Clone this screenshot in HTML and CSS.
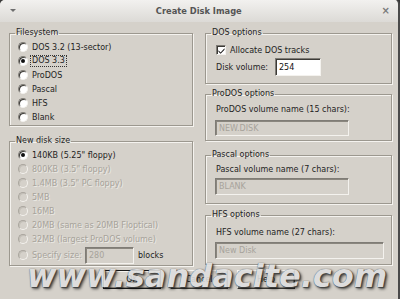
FILE: index.html
```html
<!DOCTYPE html>
<html lang="en">
<head>
    <meta charset="UTF-8">
    <title>Create Disk Image</title>
    <link rel="stylesheet" href="styles.css">
</head>
<body>
    <div class="window">
        <div class="titlebar">
            <span class="menu-arrow"></span>
            <span class="title">Create Disk Image</span>
            <span class="close">&#215;</span>
        </div>

        <div class="content">
            <div class="column column-left">
                <fieldset class="group">
                    <legend>Filesystem</legend>
                    <div class="rows rows-fs">
                        <div class="radio"><span class="radio-box"></span>DOS 3.2 (13-sector)</div>
                        <div class="radio"><span class="radio-box checked"></span><span class="focus">DOS 3.3</span></div>
                        <div class="radio"><span class="radio-box"></span>ProDOS</div>
                        <div class="radio"><span class="radio-box"></span>Pascal</div>
                        <div class="radio"><span class="radio-box"></span>HFS</div>
                        <div class="radio"><span class="radio-box"></span>Blank</div>
                    </div>
                </fieldset>

                <fieldset class="group group-size">
                    <legend>New disk size</legend>
                    <div class="rows rows-size">
                        <div class="radio"><span class="radio-box checked"></span>140KB (5.25" floppy)</div>
                        <div class="radio disabled"><span class="radio-box"></span>800KB (3.5" floppy)</div>
                        <div class="radio disabled"><span class="radio-box"></span>1.4MB (3.5" PC floppy)</div>
                        <div class="radio disabled"><span class="radio-box"></span>5MB</div>
                        <div class="radio disabled"><span class="radio-box"></span>16MB</div>
                        <div class="radio disabled"><span class="radio-box"></span>20MB (same as 20MB Floptical)</div>
                        <div class="radio disabled"><span class="radio-box"></span>32MB (largest ProDOS volume)</div>
                        <div class="radio radio-specify">
                            <span class="radio-box"></span><span class="muted specify-label">Specify size:</span>
                            <span class="field field-disabled field-blocks">280</span>
                            <span class="blocks">blocks</span>
                        </div>
                    </div>
                </fieldset>
            </div>

            <div class="column column-right">
                <fieldset class="group">
                    <legend>DOS options</legend>
                    <div class="rows rows-dos">
                        <div class="check">
                            <span class="check-box">
                                <svg width="7" height="7" viewBox="0 0 7 7"><path d="M0.5 3.2 L2.6 5.4 L6.5 1.2 L6.5 2.8 L2.6 6.8 L0.5 4.8 Z" fill="#111"/></svg>
                            </span>
                            Allocate DOS tracks
                        </div>
                        <div class="volume-row">
                            <span class="volume-label">Disk volume:</span>
                            <span class="field field-volume">254</span>
                        </div>
                    </div>
                </fieldset>

                <fieldset class="group group-prodos">
                    <legend>ProDOS options</legend>
                    <div class="rows rows-name rows-prodos">
                        <div class="name-label">ProDOS volume name (15 chars):</div>
                        <span class="field field-disabled field-name">NEW.DISK</span>
                    </div>
                </fieldset>

                <fieldset class="group group-pascal">
                    <legend>Pascal options</legend>
                    <div class="rows rows-name rows-pascal">
                        <div class="name-label">Pascal volume name (7 chars):</div>
                        <span class="field field-disabled field-name">BLANK</span>
                    </div>
                </fieldset>

                <fieldset class="group group-hfs">
                    <legend>HFS options</legend>
                    <div class="rows rows-name rows-hfs">
                        <div class="name-label">HFS volume name (27 chars):</div>
                        <span class="field field-disabled field-name field-wide">New Disk</span>
                    </div>
                </fieldset>
            </div>
        </div>

        <div class="buttons">
            <button class="btn btn-default">OK</button>
            <button class="btn">Cancel</button>
            <button class="btn">Help</button>
        </div>

        <div class="watermark">www.sandacite.com</div>
    </div>
</body>
</html>
```

FILE: styles.css
```css
html, body {
    margin: 0;
    padding: 0;
    background-color: #3a3a3a;
}
body {
    font-family: 'DejaVu Sans', 'Noto Sans', sans-serif;
    font-size: 8px;
    color: #1e1e1e;
}
.window {
    position: relative;
    width: 398px;
    height: 299px;
    background-color: #d5d1ca;
    border-right: 2px solid #4a4a4a;
    border-radius: 5px 5px 0 0;
    overflow: hidden;
}
.titlebar {
    height: 22px;
    display: flex;
    align-items: center;
    background: linear-gradient(#f2f1ef, #dcdad6);
    position: relative;
}
.menu-arrow {
    width: 0;
    height: 0;
    margin-left: 10px;
    margin-top: -2px;
    border-left: 3px solid transparent;
    border-right: 3px solid transparent;
    border-top: 3px solid #6e6e6e;
}
.title {
    flex: 1;
    text-align: center;
    font-weight: bold;
    font-size: 8.3px;
    color: #555;
    margin-top: -1px;
}
.close {
    margin-right: 8px;
    color: #7a7a7a;
    font-weight: bold;
    font-size: 10px;
    margin-top: -2px;
}
.content {
    display: flex;
    gap: 12px;
    padding: 6px 0 0 9px;
}
.column {
    display: flex;
    flex-direction: column;
}
.column-left {
    width: 184px;
}
.column-right {
    width: 187px;
}
.group {
    margin: 0;
    padding: 0;
    border: 1px solid #9c988f;
    box-shadow: 1px 1px 0 #f5f3ef, inset 1px 1px 0 #f5f3ef;
    min-width: 0;
}
.group legend {
    margin-left: 5px;
    padding: 0 1px;
    line-height: 10px;
    font-size: 8px;
    color: #1e1e1e;
}
.group-size {
    margin-top: 10px;
}
.rows-fs {
    padding: 2px 0 1px 8px;
}
.rows-size {
    padding: 2px 0 1px 8px;
}
.radio {
    display: flex;
    align-items: center;
    height: 14px;
    white-space: nowrap;
}
.radio-box {
    box-sizing: border-box;
    width: 10px;
    height: 10px;
    margin-right: 4px;
    border-radius: 50%;
    background-color: #fff;
    border: 1px solid;
    border-color: #7f7c76 #f4f2ee #f4f2ee #7f7c76;
    box-shadow: inset 1px 1px 0 #3c3a36;
    display: flex;
    align-items: center;
    justify-content: center;
}
.radio-box.checked::after {
    content: '';
    width: 4px;
    height: 4px;
    border-radius: 50%;
    background-color: #111;
}
.disabled,
.muted {
    color: #a7a39b;
    text-shadow: 1px 1px 0 #ebe9e4;
}
.disabled .radio-box,
.radio-specify .radio-box {
    background-color: #d5d1ca;
    border-color: #aaa69e #f4f2ee #f4f2ee #aaa69e;
    box-shadow: inset 1px 1px 0 #c4c0b8;
}
.focus {
    outline: 1px dotted #333;
    outline-offset: 0;
    padding: 0 1px;
    margin-left: -1px;
    line-height: 10px;
}
.radio-specify {
    height: 18px;
}
.specify-label {
    width: 53px;
}
.field {
    box-sizing: border-box;
    display: inline-flex;
    align-items: center;
    padding-left: 3px;
    border: 1px solid;
    border-color: #7f7c76 #f4f2ee #f4f2ee #7f7c76;
    box-shadow: inset 1px 1px 0 #3c3a36;
    background-color: #fff;
    color: #111;
}
.field-disabled {
    background-color: #d5d1ca;
    color: #a7a39b;
    box-shadow: inset 1px 1px 0 #8a867e;
}
.field-blocks {
    width: 49px;
    height: 17px;
}
.blocks {
    margin-left: 4px;
}
.rows-dos {
    padding: 5px 0 7px 10px;
}
.check {
    display: flex;
    align-items: center;
    height: 14px;
}
.check-box {
    box-sizing: border-box;
    width: 10px;
    height: 10px;
    margin-left: 0;
    margin-right: 4px;
    background-color: #fff;
    border: 1px solid;
    border-color: #7f7c76 #f4f2ee #f4f2ee #7f7c76;
    box-shadow: inset 1px 1px 0 #3c3a36;
    display: flex;
    align-items: center;
    justify-content: center;
}
.check-box svg {
    display: block;
    margin: 1px 0 0 1px;
}
.volume-row {
    display: flex;
    align-items: center;
    margin-top: 1px;
    height: 18px;
}
.volume-label {
    width: 59px;
}
.field-volume {
    width: 46px;
    height: 18px;
}
.group-prodos {
    margin-top: 5px;
}
.group-pascal {
    margin-top: 9px;
}
.group-hfs {
    margin-top: 6px;
}
.rows-name {
    display: flex;
    flex-direction: column;
    align-items: flex-start;
    padding-left: 10px;
}
.name-label {
    line-height: 10px;
}
.rows-name .field {
    margin-left: -1px;
}
.field-name {
    width: 134px;
    height: 17px;
}
.field-wide {
    width: 169px;
}
.rows-prodos {
    padding-top: 6px;
    padding-bottom: 4px;
}
.rows-prodos .field {
    margin-top: 5px;
    height: 16px;
}
.rows-pascal {
    padding-top: 5px;
    padding-bottom: 8px;
}
.rows-pascal .field {
    margin-top: 3px;
}
.rows-hfs {
    padding-top: 8px;
    padding-bottom: 5px;
}
.rows-hfs .field {
    margin-top: 4px;
}
.buttons {
    display: flex;
    gap: 9px;
    padding-left: 103px;
    margin-top: 4px;
}
.btn {
    box-sizing: border-box;
    width: 58px;
    height: 19px;
    padding: 0;
    font-family: 'DejaVu Sans', sans-serif;
    font-size: 8px;
    color: #111;
    background-color: #d5d1ca;
    border: 1px solid;
    border-color: #f6f4f0 #3a3834 #3a3834 #f6f4f0;
    box-shadow: inset -1px -1px 0 #8a867e;
}
.btn-default {
    border-color: #1a1a1a;
    box-shadow: inset 1px 1px 0 #f6f4f0, inset -1px -1px 0 #8a867e;
}
.watermark {
    position: absolute;
    left: 27px;
    top: 260px;
    font-family: 'DejaVu Sans', sans-serif;
    font-weight: bold;
    font-style: italic;
    font-size: 32px;
    line-height: 32px;
    color: #dedede;
    opacity: 0.9;
    white-space: nowrap;
    text-shadow: 0 0 1px #3c3c3c, 1px 1px 1px #333, 2px 2px 3px rgba(0, 0, 0, 0.7);
}
```
